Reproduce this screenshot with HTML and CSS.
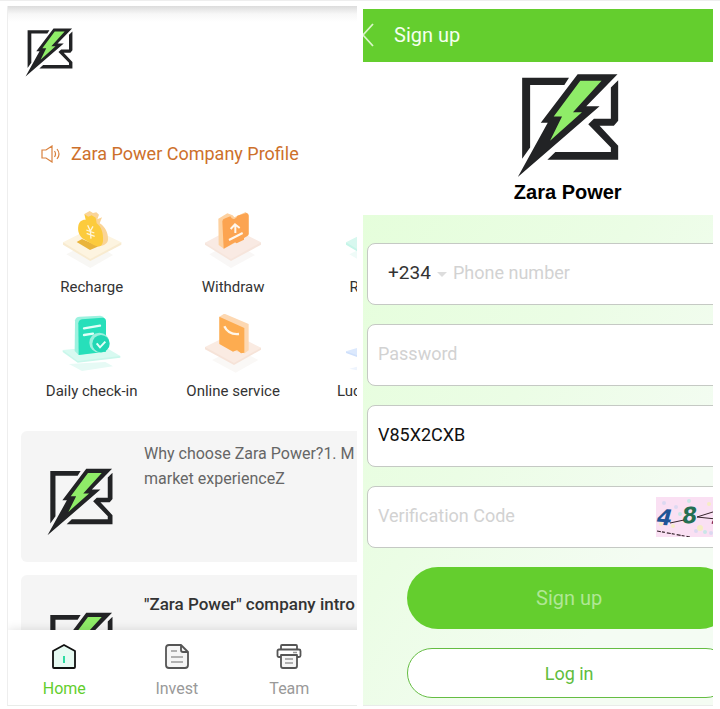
FILE: index.html
```html
<!DOCTYPE html>
<html lang="en">
<head>
<meta charset="utf-8">
<title>Zara Power</title>
<link rel="stylesheet" href="styles.css">
</head>
<body>
<svg class="defs" aria-hidden="true">
  <symbol id="logo" viewBox="48 24 306 316">
    <path fill="#222325" d="M63 38H204L190 60H87V248L63 282ZM352 46V168L339 183H296L352 243V285H139L163 262H330V248L262 178L279 162H330V68Z"/>
    <path fill="#222325" d="M230 28H350L256 124H296L50 337L140 174H119Z"/>
    <path fill="#8fec68" d="M238 47H302L216 142H243L147 228L183 155H158Z"/>
  </symbol>
</svg>
<main class="screens">
  <section class="screen home">
    <div class="home-content">
      <header class="brand"><svg class="logo-small"><use href="#logo"/></svg></header>
      <a class="notice" href="#profile">
        <svg class="speaker" viewBox="0 0 20 18" fill="none" stroke="#d9803c" stroke-width="1.2"><path d="M1 5H5L11 1V17L5 13H1ZM13.500 6Q15.500 9 13.500 12M16 4Q20 9 16 14"/></svg>
        <span>Zara Power Company Profile</span>
      </a>
      <nav class="shortcuts">
        <a href="#recharge">
          <svg viewBox="125 30 180 180">
            <path fill="#f8f7f4" d="M138 163L213 125L278 165L210 204Z"/>
            <path fill="#f8ebd0" d="M128 127V134L210 183L303 134V127Z"/>
            <path fill="#fdf4e0" d="M128 127L213 84L303 127L210 177Z"/>
            <path fill="#e9b43c" d="M169 126L185 117L235 139L209 150Z"/>
            <path fill="#fad497" d="M192 42L208 33L218 39L228 37L236 44L231 58L245 52L238 70C254 80 264 98 263 119C262 132 249 137 232 140L215 62Z"/>
            <path fill="#fccb3d" d="M192 42L204 50L214 46L226 53L229 70C243 80 250 100 248 123C246 141 235 142 220 135L191 118C177 109 171 94 174 77C176 65 185 58 196 59Z"/>
            <path fill="none" stroke="#fff5d9" stroke-width="4" d="M202 76L210 93L218 79M210 93L212 116M198 90L222 99M199 100L223 109"/>
          </svg>
          <span>Recharge</span>
        </a>
        <a href="#withdraw">
          <svg viewBox="551 30 180 180">
            <path fill="#f9f7f6" d="M570 163L640 125L707 165L635 204Z"/>
            <path fill="#f6e5dc" d="M557 128V134L635 183L725 134V127Z"/>
            <path fill="#f9eae3" d="M557 128L640 84L725 127L635 177Z"/>
            <path fill="#fdd1a0" d="M597 56L624 40L640 46L645 52L679 36L688 45V106L614 146L598 135Z"/>
            <path fill="#fca451" d="M609 64Q610 57 618 55L633 49Q638 59 646 56Q653 53 654 47L681 39Q688 40 688 47V102Q686 108 679 111L674 114V119L652 130L647 127L613 146Z"/>
            <path fill="none" stroke="#fff7ed" stroke-width="6" d="M648 75V99M634 87L647 73L661 84M629 120L670 99"/>
          </svg>
          <span>Withdraw</span>
        </a>
        <a href="#reward">
          <svg viewBox="125 30 180 180">
            <path fill="#effbf8" d="M138 163L213 125L278 165L210 204Z"/>
            <path fill="#c5f5e8" d="M128 127V134L210 183L303 134V127Z"/>
            <path fill="#d7f8ef" d="M128 127L213 84L303 127L210 177Z"/>
            <path fill="#4bddbb" d="M190 55L245 42V125L190 144Z"/>
          </svg>
          <span>Reward</span>
        </a>
        <a href="#checkin">
          <svg viewBox="125 42 180 180">
            <path fill="#e6faf5" d="M146 192L255 186L278 199L185 213Z"/>
            <path fill="#c9f7eb" d="M127 151V156L172 188L300 173V168Z"/>
            <path fill="#d8faf1" d="M127 150L250 139L300 168L172 183Z"/>
            <path fill="#9cf2df" d="M164 61Q166 51 178 50L240 47Q250 48 254 57L258 152L175 165L163 153Z"/>
            <path fill="#27dfba" d="M174 70Q175 60 185 58L246 53Q257 53 257 64V155L175 165Z"/>
            <path fill="none" stroke="#e3fff8" stroke-width="7" stroke-linecap="round" d="M191 85L239 77M191 105L218 101"/>
            <circle cx="237" cy="128" r="30" fill="#9cf0de"/><circle cx="242" cy="131" r="26" fill="#21d7b4"/>
            <path fill="none" stroke="#e3fff8" stroke-width="6" d="M229 130L239 142L255 125"/>
          </svg>
          <span>Daily check-in</span>
        </a>
        <a href="#service">
          <svg viewBox="551 42 180 180">
            <path fill="#faf8f6" d="M578 180L650 145L717 180L649 218Z"/>
            <path fill="#f6e3d8" d="M557 141V148L644 195L725 149V143Z"/>
            <path fill="#faebe2" d="M557 141L640 100L725 143L644 189Z"/>
            <path fill="#fdd8b2" d="M600 50L615 41L688 72V151L676 160L648 153L600 130Z"/>
            <path fill="#fdac50" d="M600 50L675 84V158L665 160L653 150L641 155L600 132Z"/>
            <path fill="none" stroke="#fff6e9" stroke-width="7" d="M615 79Q627 105 659 102"/>
          </svg>
          <span>Online service</span>
        </a>
        <a href="#lucky">
          <svg viewBox="125 42 180 180">
            <path fill="#eef4fd" d="M138 206L213 187L278 206L210 220Z"/>
            <path fill="#cfe0fb" d="M128 154V159L210 189L303 160V154Z"/>
            <path fill="#dce9fd" d="M128 154L213 128L303 154L210 183Z"/>
            <circle cx="215" cy="105" r="42" fill="#77a8f6"/>
          </svg>
          <span>Lucky draw</span>
        </a>
      </nav>
      <div class="articles">
        <article class="card"><svg class="logo-card"><use href="#logo"/></svg><p>Why choose Zara Power?1. M<br>market experienceZ</p></article>
        <article class="card" id="profile"><svg class="logo-card"><use href="#logo"/></svg><h2>"Zara Power" company intro</h2></article>
      </div>
    </div>
    <nav class="tabs">
      <a class="active" href="#home">
        <svg viewBox="0 0 26 26"><path d="M2 8L13 2L24 8V24Q24 25 23 25H3Q2 25 2 24Z" fill="#e6faf2" stroke="#111" stroke-width="1.800" stroke-linejoin="round"/><path d="M13 13V20" stroke="#2edba2" stroke-width="2"/></svg>
        <span>Home</span></a>
      <a href="#invest">
        <svg viewBox="0 0 26 26" fill="none" stroke="#555" stroke-width="1.800"><path fill="#f5f5f5" d="M17 2H5Q2 2 2 5V22Q2 25 5 25H21Q24 25 24 22V9ZM17 2V7Q17 9 19 9H24" stroke-linejoin="round"/><path d="M7 8H13M7 14H19M7 19H19" stroke="#999" stroke-width="1.500"/></svg>
        <span>Invest</span></a>
      <a href="#team">
        <svg viewBox="0 0 26 26" fill="none" stroke="#555" stroke-width="1.800" stroke-linejoin="round"><path d="M5 6V3Q5 2 6 2H20Q21 2 21 3V6M5 14H3Q1.500 14 1.500 12.500V8Q1.500 6.500 3 6.500H23Q24.500 6.500 24.500 8V12.500Q24.500 14 23 14H21"/><path fill="#f5f5f5" d="M5 12H21V23Q21 25 19 25H7Q5 25 5 23Z"/><path d="M17 9.500H21M9 16H17M9 20H17" stroke="#999" stroke-width="1.500"/></svg>
        <span>Team</span></a>
      <a href="#mine"><svg viewBox="0 0 26 26" fill="none" stroke="#555" stroke-width="1.800"><circle cx="13" cy="8" r="6"/><path d="M3 25Q3 16 13 16Q23 16 23 25Z"/></svg><span>Mine</span></a>
    </nav>
  </section>

  <section class="screen signup">
    <header class="bar">
      <button class="back" type="button" aria-label="Back"><svg viewBox="0 0 12 24" fill="none" stroke="#d9f7c8" stroke-width="1.800"><path d="M10 1L0 12L10 23"/></svg></button>
      <h1>Sign up</h1>
    </header>
    <div class="hero"><svg class="logo-large"><use href="#logo"/></svg><strong>Zara Power</strong></div>
    <form class="form">
      <div class="field phone">
        <select aria-label="Country code"><option>+234</option></select>
        <span class="caret"></span>
        <input type="tel" aria-label="Phone number" placeholder="Phone number">
      </div>
      <div class="field"><input type="password" aria-label="Password" placeholder="Password"></div>
      <div class="field"><input type="text" aria-label="Invitation code" value="V85X2CXB"></div>
      <div class="field code">
        <input type="text" aria-label="Verification Code" placeholder="Verification Code">
        <svg class="captcha" viewBox="0 0 100 40">
          <path fill="#fae0f3" d="M0 0H100V40H0Z"/>
          <g fill="#dcd8f1"><circle cx="8" cy="6" r="2"/><circle cx="20" cy="10" r="2"/><circle cx="40" cy="34" r="2"/><circle cx="55" cy="36" r="2"/></g>
          <g fill="#f6edc4"><circle cx="17" cy="29" r="2"/><circle cx="44" cy="31" r="3"/><circle cx="53" cy="7" r="2"/><circle cx="5" cy="27" r="2"/></g>
          <g fill="#c9e6e8"><circle cx="33" cy="4" r="2"/><circle cx="49" cy="35" r="2"/><circle cx="24" cy="17" r="2"/></g>
          <text x="1" y="28" fill="#215496" transform="rotate(4 8 22)">4</text>
          <text x="26" y="26" fill="#246f52" transform="rotate(-6 34 18)">8</text>
          <path fill="none" stroke="#36242c" d="M14 26L28 23M41 20L60 14M41 20L60 22"/>
          <path fill="none" stroke="#36242c" stroke-width="1.200" stroke-dasharray="4 1 3 2" d="M1 34L34 40"/>
          <path fill="none" stroke="#8a2a52" stroke-width="3" d="M56 25L68 30"/>
        </svg>
      </div>
      <button class="primary" type="submit" disabled>Sign up</button>
      <button class="secondary" type="button">Log in</button>
    </form>
  </section>
</main>
</body>
</html>
```

FILE: styles.css
```css
* { box-sizing: border-box; }
body { margin: 0; background: #fff; font-family: Roboto, "Liberation Sans", sans-serif; color: #333; }
h1, h2, p { margin: 0; font-weight: 400; }
a { color: inherit; text-decoration: none; }
svg { display: block; flex-shrink: 0; }
.defs { display: none; }

.screens {
  display: grid;
  grid-template-columns: 1fr 1fr;
  gap: 6px;
  height: calc(100vh - 3px);
  padding: 0 7px;
  border-top: 1px solid #eee;
}
.screen { display: flex; flex-direction: column; min-width: 0; min-height: 0; overflow: hidden; border-bottom: 1px solid #e9ece9; }

.home { margin-top: 5px; border-left: 1px solid #eee; background: linear-gradient(#dcdcdc, #f7f7f7 8px, #fff 16px); }
.home-content { flex: 1; width: 129%; min-height: 0; overflow: hidden; padding: 22px 13px 0; }
.brand { padding-left: 4px; }
.logo-small { width: 48px; height: 49px; }
.notice { display: flex; align-items: center; gap: 10px; margin-top: 65px; padding-left: 20px; line-height: 24px; font-size: 18px; color: #cd702b; }
.speaker { width: 20px; height: 18px; }
.shortcuts { display: grid; grid-template-columns: repeat(3, 1fr); row-gap: 17px; margin-top: 44px; text-align: center; font-size: 15px; line-height: 20px; }
.shortcuts svg { width: 60px; height: 60px; margin: 0 auto 7px; }
.articles { display: grid; gap: 13px; margin-top: 30px; }
.card { display: flex; gap: 31px; height: 131px; padding: 10px 26px; border-radius: 6px; background: #f5f5f5; font-size: 16px; line-height: 25px; color: #666; white-space: nowrap; }
.logo-card { width: 66px; height: 68px; margin-top: 27px; }
.card h2 { padding-top: 7px; font-size: 17px; font-weight: 500; color: #333; }
.tabs { display: grid; grid-template-columns: repeat(4, 1fr); width: 129%; height: 75px; padding-top: 13px; background: #fff; box-shadow: 0 0 10px #0002; text-align: center; font-size: 16px; line-height: 20px; color: #999; }
.tabs svg { width: 26px; height: 26px; margin: 0 auto 10px; }
.tabs .active { color: #63ce2d; }

.signup { margin-top: 8px; }
.bar { display: flex; align-items: center; gap: 20px; height: 53px; padding-bottom: 2px; flex-shrink: 0; background: #64ce2e; }
.bar h1 { font-size: 20px; line-height: 24px; color: #f5fff0; }
.back { width: 11px; padding: 0; border: 0; background: none; }
.back svg { width: 12px; height: 24px; }
.hero { display: flex; flex-direction: column; align-items: center; flex-shrink: 0; width: 117%; height: 153px; padding-top: 11px; }
.hero strong { margin-top: 2px; font: bold 20px/24px "Liberation Sans", sans-serif; color: #000; }
.logo-large { width: 102px; height: 105px; }
.form { display: flex; flex: 1; flex-direction: column; gap: 19px; min-width: 100%; padding: 28px 0 8px 4px; background: linear-gradient(125deg, #e5fedb, #ebfde5 40%, #f4fcf3 75%); }
.field { display: flex; align-items: center; flex-shrink: 0; width: calc(118% - 4px); height: 62px; padding: 0 10px; border: 1px solid #c5c9c4; border-radius: 8px; background: #fff; }
.field input, .field select { height: 24px; min-width: 0; margin: 0 0 2px; padding: 0; border: 0; outline: 0; background: none; font-family: inherit; font-size: 18px; line-height: 24px; color: #111; }
.field input { flex: 1; }
.field input::placeholder { color: #d2d2d2; opacity: 1; }
.phone { padding-left: 20px; }
.field select { appearance: none; font-size: 19px; color: #333; }
.caret { margin: 0 6px; border: 5px solid transparent; border-top-color: #ddd; border-bottom: 0; }
.captcha { width: 100px; height: 40px; margin-right: 4px; font: italic bold 22px "DejaVu Sans", sans-serif; }
.primary, .secondary { flex-shrink: 0; width: calc(118% - 84px); margin-left: 40px; border-radius: 32px; font-family: inherit; }
.primary { height: 62px; border: 0; background: #64ce2e; font-size: 20px; color: #b0e795; }
.secondary { height: 50px; border: 1px solid #65bd43; background: #fff; font-size: 18px; color: #61bd3d; }
```
